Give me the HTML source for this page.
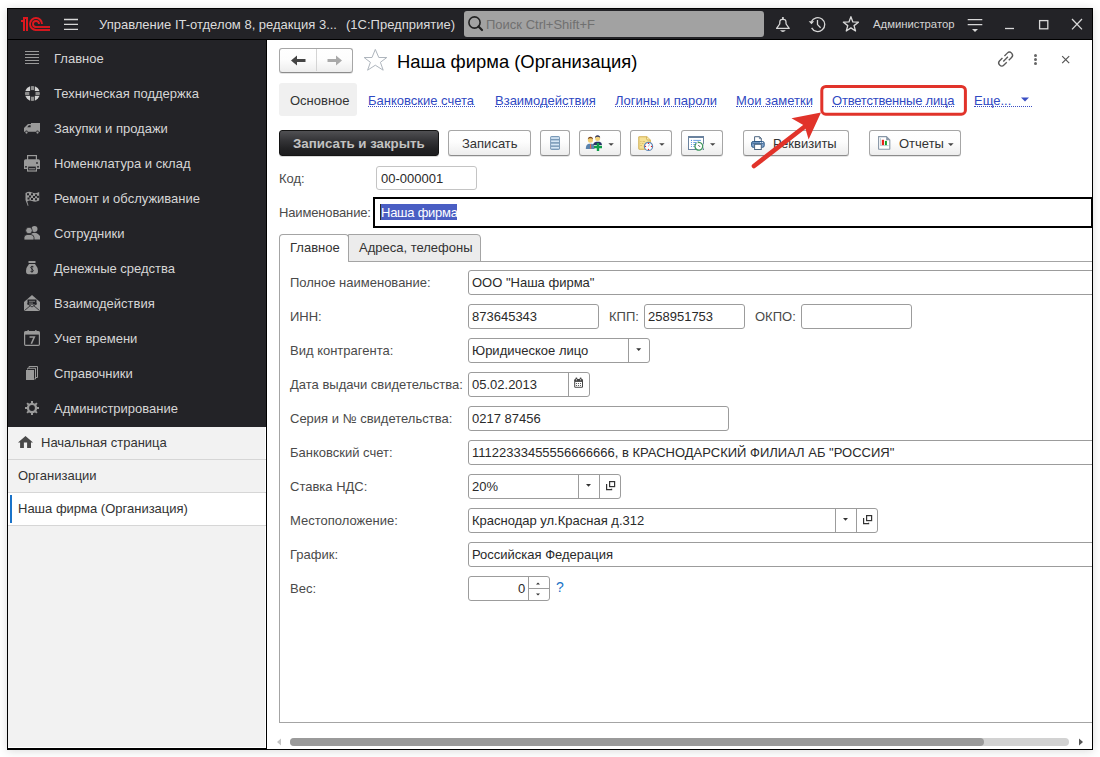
<!DOCTYPE html>
<html><head><meta charset="utf-8">
<style>
*{box-sizing:border-box;margin:0;padding:0}
html,body{width:1100px;height:757px;overflow:hidden;background:#fff;font-family:"Liberation Sans",sans-serif;font-size:13px;color:#333}
.a{position:absolute}
svg.a{overflow:visible}
.t{position:absolute;white-space:nowrap;line-height:15px}
#win{position:absolute;left:7px;top:8px;width:1086px;height:742px;border:1px solid #000;background:#fff;box-shadow:0 1px 9px rgba(0,0,0,0.15)}
#hdr{position:absolute;left:8px;top:9px;width:1084px;height:30px;background:#232327}
#hline{position:absolute;left:8px;top:39px;width:1084px;height:1px;background:#000}
#side{position:absolute;left:8px;top:40px;width:258px;height:387px;background:#232327}
#sline{position:absolute;left:266px;top:40px;width:1px;height:709px;background:#000}
#sidel{position:absolute;left:8px;top:427px;width:258px;height:321px;background:#f2f2f2;border-right:1px solid #fff;border-bottom:1px solid #fff}
#sbot{position:absolute;left:8px;top:748px;width:258px;height:1px;background:#000}
.st{color:#d6d6d6}
.sep{position:absolute;left:8px;width:258px;height:1px;background:#d6d6d6}
.lnk{color:#3049c2;line-height:15px}
.ul{position:absolute;height:1px;border-top:1px dotted #3b4fc4}
.btn{position:absolute;height:26px;border:1px solid #a6a6a6;border-bottom-color:#8c8c8c;border-radius:3px;background:linear-gradient(#ffffff 0%,#fdfdfd 45%,#ededed 100%);box-shadow:0 1px 0 rgba(0,0,0,0.10)}
.inp{position:absolute;height:25px;border:1px solid #9c9c9c;border-radius:3px;background:#fff}
.vd{position:absolute;width:1px;background:#9c9c9c}
.lbl{color:#4a4a4a}
.val{color:#2a2a2a}
</style></head><body>
<div id="win"></div>
<div id="hdr"></div>
<div id="hline"></div>
<div id="side"></div>
<div id="sline"></div>
<div id="sidel"></div>
<div id="sbot"></div>

<div class="a" style="left:0;top:0;width:1092px;height:749px;overflow:hidden">
<!-- header -->
<svg class="a" style="left:0;top:0" width="60" height="40">
 <g fill="#dd181e">
  <rect x="23" y="17" width="5" height="2"/>
  <rect x="23" y="17" width="2" height="14"/>
  <rect x="26" y="17" width="2" height="14"/>
  <rect x="21" y="20" width="3" height="2"/>
 </g>
 <g fill="none" stroke="#dd181e" stroke-width="1.9">
  <path d="M36 30 A6 6 0 1 1 42 24"/>
  <path d="M36 27 A3 3 0 1 1 39 24"/>
  <path d="M35.8 30 H50"/>
  <path d="M35.8 27 H50"/>
 </g>
</svg>
<svg class="a" style="left:0;top:0" width="90" height="40"><g stroke="#d8d8d8" stroke-width="1.3"><path d="M64 19.5H78M64 24.4H78M64 29.3H78"/></g></svg>
<div class="t" style="left:99px;top:17px;color:#dcdcdc">Управление IT-отделом 8, редакция 3...</div>
<div class="t" style="left:346px;top:17px;color:#dcdcdc">(1С:Предприятие)</div>
<div class="a" style="left:464px;top:11px;width:300px;height:26px;background:#a2a2a2;border-radius:3px"></div>
<svg class="a" style="left:464px;top:11px" width="30" height="26"><circle cx="10.5" cy="11.5" r="5.6" fill="none" stroke="#222" stroke-width="1.6"/><path d="M14.5 15.5 L18 19" stroke="#222" stroke-width="2.2" stroke-linecap="round"/></svg>
<div class="t" style="left:486px;top:17px;color:#707070">Поиск Ctrl+Shift+F</div>
<!-- bell -->
<svg class="a" style="left:770px;top:10px" width="26" height="26"><path d="M6.6 18.4 L9.7 14 L9.9 11.3 Q10.1 9.4 12.9 9.4 Q15.7 9.4 15.9 11.3 L16.1 14 L19.2 18.4 Z" fill="none" stroke="#d8d8d8" stroke-width="1.3" stroke-linejoin="round"/><circle cx="12.9" cy="8.1" r="1.1" fill="#d8d8d8"/><path d="M10 20.2 H15.8 Q12.9 23.6 10 20.2Z" fill="#d8d8d8"/></svg>
<!-- history -->
<svg class="a" style="left:803px;top:10px" width="28" height="26"><path d="M8.6 17.9 A7 7 0 1 0 8.4 11.6" fill="none" stroke="#d8d8d8" stroke-width="1.3"/><path d="M5.7 11.3 H11.2 L8.5 14.3Z" fill="#d8d8d8"/><path d="M14.5 10 V14.6 L17.6 17.7" fill="none" stroke="#d8d8d8" stroke-width="1.3"/></svg>
<!-- star header -->
<svg class="a" style="left:838px;top:10px" width="26" height="26"><path d="M12.90 6.70 L14.84 11.93 L20.41 12.16 L16.04 15.62 L17.54 20.99 L12.90 17.90 L8.26 20.99 L9.76 15.62 L5.39 12.16 L10.96 11.93Z" fill="none" stroke="#d8d8d8" stroke-width="1.3" stroke-linejoin="round"/></svg>
<div class="t" style="left:873px;top:17px;color:#d4d4d4;font-size:11.3px">Администратор</div>
<svg class="a" style="left:960px;top:10px" width="30" height="26"><path d="M7.7 9.6H22.3M7.7 14.6H22.3" stroke="#d8d8d8" stroke-width="1.3"/><path d="M12 19 H18 L15 22Z" fill="#d8d8d8"/></svg>
<svg class="a" style="left:1000px;top:10px" width="90" height="26"><path d="M5 18.5 H14" stroke="#d8d8d8" stroke-width="1.3"/><rect x="39.6" y="10.6" width="8.2" height="8.2" fill="none" stroke="#d8d8d8" stroke-width="1.3"/><path d="M72 9 L82 19.4 M82 9 L72 19.4" stroke="#d8d8d8" stroke-width="1.3"/></svg>

<!-- sidebar -->
<svg class="a" style="left:0;top:40px" width="50" height="390">
 <g fill="#9a9a9a">
  <rect x="25" y="11" width="14" height="1"/><rect x="25" y="14" width="14" height="1"/><rect x="25" y="17" width="14" height="1"/><rect x="25" y="20" width="14" height="1"/><rect x="25" y="23" width="14" height="1"/>
 </g>
 <!-- lifebuoy center 32.5,53.5 -->
 <clipPath id="lb"><circle cx="32.4" cy="53.4" r="7.5"/></clipPath>
 <g clip-path="url(#lb)">
  <g fill="#d2d2d2"><rect x="24" y="45" width="6.1" height="6"/><rect x="34.8" y="45" width="6.1" height="6"/><rect x="24" y="55.8" width="6.1" height="6"/><rect x="34.8" y="55.8" width="6.1" height="6"/></g>
  <g fill="#8e8e8e"><rect x="30.9" y="45.5" width="3.1" height="4.6"/><rect x="30.9" y="56.7" width="3.1" height="4.6"/><rect x="24.5" y="51.85" width="4.8" height="3.15"/><rect x="35.5" y="51.85" width="4.8" height="3.15"/></g>
 </g>
 <!-- truck -->
 <path d="M24 91.8 V88 L28 84 H31 V83 H40 V91.8 H38.7 A1.2 1.2 0 0 0 36.3 91.8 H27.7 A1.2 1.2 0 0 0 25.3 91.8Z" fill="#9a9a9a"/>
 <path d="M27.2 87.2 L28.9 85.2 H30.6 V87.2Z" fill="#232327"/>
 <circle cx="26.5" cy="92.6" r="1.1" fill="#9a9a9a"/><circle cx="37.5" cy="92.6" r="1.1" fill="#9a9a9a"/>
 <!-- printer -->
 <rect x="27.6" y="115.6" width="8.8" height="5" fill="none" stroke="#9a9a9a" stroke-width="1.2"/>
 <path d="M24 121 Q24 119.3 25.7 119.3 H38.3 Q40 119.3 40 121 V129 H37 V126 H27 V129 H24Z" fill="#9a9a9a"/>
 <rect x="27.6" y="126" width="8.8" height="5" fill="none" stroke="#9a9a9a" stroke-width="1.2"/>
 <rect x="29" y="128.3" width="6" height="1" fill="#9a9a9a"/>
 <rect x="36.2" y="122.2" width="1.6" height="1.6" fill="#232327"/><rect x="25.2" y="126" width="1.6" height="1.6" fill="#232327"/><rect x="37.2" y="126" width="1.6" height="1.6" fill="#232327"/>
 <!-- flag -->
 <path d="M25.5 153 Q29 151 32 152.5 Q36 154 39.2 152 V160.5 Q36 162.5 32 161 Q29 160 27.2 161.5 L28.5 165.5 L27.8 166 L25.5 160Z" fill="#9a9a9a"/>
 <g fill="#232327"><rect x="27" y="153.3" width="2" height="2"/><rect x="31" y="153.3" width="2" height="2"/><rect x="35" y="154.3" width="2" height="2"/><rect x="29" y="155.5" width="2" height="2"/><rect x="33" y="156" width="2" height="2"/><rect x="37" y="155.8" width="2" height="2"/><rect x="27.5" y="157.5" width="2" height="2"/><rect x="31" y="158" width="2" height="2"/><rect x="35" y="158.3" width="2" height="2"/></g>
 <!-- people -->
 <circle cx="34.5" cy="189" r="3" fill="#9a9a9a"/>
 <path d="M31 194 Q34.5 191.5 38 194 L40 196 V199.5 H32Z" fill="#9a9a9a"/>
 <path d="M29.5 192.6 V191" stroke="#232327" stroke-width="0"/>
 <circle cx="29" cy="190.5" r="3.3" fill="#9a9a9a" stroke="#232327" stroke-width="0.8"/>
 <path d="M24 200 V197.5 Q24 195 27 194.5 H31 Q34 195 34 197.5 V200Z" fill="#9a9a9a" stroke="#232327" stroke-width="0.8"/>
 <!-- money bag -->
 <rect x="28.5" y="221" width="7" height="2" fill="#9a9a9a"/>
 <path d="M29 224 H35 Q38 227.5 38 231 Q38 234.3 35.5 234.3 H28.5 Q26 234.3 26 231 Q26 227.5 29 224Z" fill="#9a9a9a"/>
 <path d="M33.5 226.8 Q32 226 31 226.8 Q30 228 32 229 Q34 230 33 231.4 Q32 232.2 30.5 231.4 M32 225.8 V232.5" fill="none" stroke="#232327" stroke-width="0.9"/>
 <!-- envelope -->
 <path d="M24 262 L32 255 L40 262 V270 Q40 271 39 271 H25 Q24 271 24 270Z" fill="#9a9a9a"/>
 <rect x="27.5" y="259.5" width="9" height="5" fill="#232327"/>
 <rect x="29" y="260.8" width="6" height="1" fill="#7a7a7a"/><rect x="29" y="262.6" width="4" height="1" fill="#7a7a7a"/>
 <path d="M24.5 270.5 L30.5 265.5 M39.5 270.5 L33.5 265.5 M27 263.5 L32 267 L37 263.5" fill="none" stroke="#232327" stroke-width="0.8"/>
 <!-- calendar -->
 <rect x="24.6" y="291.6" width="14.8" height="13.8" rx="1.2" fill="none" stroke="#9a9a9a" stroke-width="1.2"/>
 <rect x="24.6" y="291.6" width="14.8" height="3" fill="#9a9a9a"/>
 <rect x="27.5" y="290" width="1.3" height="3" fill="#9a9a9a"/><rect x="35.2" y="290" width="1.3" height="3" fill="#9a9a9a"/>
 <path d="M29.5 297 H34.3 L31.3 303.8" fill="none" stroke="#9a9a9a" stroke-width="1.6"/>
 <!-- books -->
 <path d="M29 328 V326.5 H37.5 V337.5 H36" fill="none" stroke="#9a9a9a" stroke-width="1"/>
 <path d="M27.5 329.5 V328.3 H35.5 V339 H34.3" fill="none" stroke="#9a9a9a" stroke-width="1"/>
 <rect x="26" y="330" width="8" height="10" fill="#9a9a9a"/>
 <!-- gear -->
 <g stroke="#9a9a9a" stroke-width="2"><path d="M32 361V375M25 368H39M27.1 363.1L36.9 372.9M36.9 363.1L27.1 372.9"/></g>
 <circle cx="32" cy="368" r="5.2" fill="#9a9a9a"/>
 <circle cx="32" cy="368" r="2.9" fill="#232327"/>
</svg>
<div class="t st" style="left:54px;top:51px">Главное</div>
<div class="t st" style="left:54px;top:86px">Техническая поддержка</div>
<div class="t st" style="left:54px;top:121px">Закупки и продажи</div>
<div class="t st" style="left:54px;top:156px">Номенклатура и склад</div>
<div class="t st" style="left:54px;top:191px">Ремонт и обслуживание</div>
<div class="t st" style="left:54px;top:226px">Сотрудники</div>
<div class="t st" style="left:54px;top:261px">Денежные средства</div>
<div class="t st" style="left:54px;top:296px">Взаимодействия</div>
<div class="t st" style="left:54px;top:331px">Учет времени</div>
<div class="t st" style="left:54px;top:366px">Справочники</div>
<div class="t st" style="left:54px;top:401px">Администрирование</div>

<div class="sep" style="top:459px"></div>
<div class="sep" style="top:492px"></div>
<div class="a" style="left:8px;top:493px;width:258px;height:32px;background:#fff"></div>
<div class="a" style="left:10px;top:495px;width:2px;height:28px;background:#1a73c9"></div>
<div class="sep" style="top:525px"></div>
<svg class="a" style="left:0;top:420px" width="40" height="40"><path d="M25.5 16 L33 22.6 H31 V27.9 H27.1 V22.6 H23.9 V27.9 H20.1 V22.6 H18Z" fill="#4a4a4a"/></svg>
<div class="t" style="left:41px;top:435px;color:#333">Начальная страница</div>
<div class="t" style="left:18px;top:468px;color:#333">Организации</div>
<div class="t" style="left:18px;top:501px;color:#333">Наша фирма (Организация)</div>

<!-- form header -->
<div class="btn" style="left:279px;top:48px;width:74px;height:25px"></div>
<div class="a" style="left:316px;top:49px;width:1px;height:22px;background:#d4d4d4"></div>
<svg class="a" style="left:279px;top:48px" width="74" height="25"><path d="M12 12.5 L18 7.5 V11 H26.5 V14 H18 V17.5Z" fill="#444"/><path d="M63 12.5 L57 7.5 V11 H48.5 V14 H57 V17.5Z" fill="#a9a9a9"/></svg>
<svg class="a" style="left:360px;top:46px" width="30" height="30"><path d="M15.3 3.4 L18.8 11.5 L26.8 11.5 L20.4 16.3 L23.2 24.2 L15.3 19.2 L7.6 24.2 L10.4 16.3 L4.1 11.5 L12 11.5Z" fill="none" stroke="#aeb5bd" stroke-width="1" stroke-linejoin="round"/></svg>
<div class="t" style="left:397px;top:51px;font-size:18.4px;line-height:21px;color:#000">Наша фирма (Организация)</div>
<svg class="a" style="left:990px;top:45px" width="90" height="30">
 <g fill="none" stroke="#5a5a5a" transform="translate(15.6 14.1) rotate(-45) scale(1.17)" stroke-width="1.15">
  <path d="M-1.2 -2.6 H-4.6 A2.6 2.6 0 0 0 -4.6 2.6 H-1.2"/>
  <path d="M1.2 -2.6 H4.6 A2.6 2.6 0 0 1 4.6 2.6 H1.2"/>
  <path d="M-2.8 0 H2.8"/>
 </g>
 <g fill="#666"><circle cx="45.5" cy="10.5" r="1.5"/><circle cx="45.5" cy="14.5" r="1.5"/><circle cx="45.5" cy="18.5" r="1.5"/></g>
 <path d="M72.2 11.2 L79.2 18.2 M79.2 11.2 L72.2 18.2" stroke="#555" stroke-width="1.2"/>
</svg>

<div class="a" style="left:279px;top:83px;width:78px;height:33px;background:#f0f0f0;border-radius:3px"></div>
<div class="t" style="left:290px;top:93px;color:#333">Основное</div>
<div class="t lnk" style="left:368px;top:93px">Банковские счета</div><div class="ul" style="left:368px;top:106px;width:107px"></div>
<div class="t lnk" style="left:495px;top:93px">Взаимодействия</div><div class="ul" style="left:495px;top:106px;width:100px"></div>
<div class="t lnk" style="left:615px;top:93px">Логины и пароли</div><div class="ul" style="left:615px;top:106px;width:101px"></div>
<div class="t lnk" style="left:736px;top:93px">Мои заметки</div><div class="ul" style="left:736px;top:106px;width:76px"></div>
<div class="t lnk" style="left:832px;top:93px;letter-spacing:-0.2px">Ответственные лица</div><div class="ul" style="left:832px;top:106px;width:122px"></div>
<div class="t lnk" style="left:974px;top:93px">Еще...</div><div class="ul" style="left:974px;top:106px;width:58px"></div>
<svg class="a" style="left:1020px;top:96px" width="12" height="10"><path d="M1 1.5 H9 L5 5.5Z" fill="#3b4fc4"/></svg>

<!-- toolbar -->
<div class="a" style="left:279px;top:130px;width:160px;height:26px;background:linear-gradient(#505053,#343437 40%,#222224 75%,#1d1d1f);border-radius:3px;border:1px solid #141414;box-shadow:0 1px 0 rgba(0,0,0,0.15)"></div>
<div class="t" style="left:293px;top:136px;color:#c2c2c2;font-weight:bold;font-size:13.3px">Записать и закрыть</div>
<div class="btn" style="left:448px;top:130px;width:83px"></div>
<div class="t" style="left:462px;top:136px;color:#333">Записать</div>
<div class="btn" style="left:540px;top:130px;width:30px"></div>
<svg class="a" style="left:540px;top:130px" width="30" height="26"><rect x="10.1" y="6.1" width="9.9" height="13.8" rx="1.6" fill="#7a9ab8"/><g fill="#d5e6f5"><rect x="11.1" y="7.2" width="7.9" height="1.7"/><rect x="11.1" y="10.4" width="7.9" height="1.7"/><rect x="11.1" y="13.7" width="7.9" height="1.7"/><rect x="11.1" y="16.9" width="7.9" height="1.7"/></g></svg>
<div class="btn" style="left:579px;top:130px;width:42px"></div>
<svg class="a" style="left:579px;top:130px" width="42" height="26">
 <path d="M6.8 19 Q6.8 14.3 10 13.8 H13 Q15.5 14.3 15.5 19Z" fill="#5a83ad"/><path d="M11.1 14 H12 L12.2 18.8 H10.9Z" fill="#e0654f"/>
 <path d="M14 15 Q14.5 12.2 17 11.8 H20.5 Q22.8 12.2 23 15Z" fill="#283266"/>
 <circle cx="11.4" cy="10.2" r="2.5" fill="#f0cc70"/><path d="M8.8 9.6 Q8.9 6.8 11.4 6.8 Q13.9 6.8 14 9.6 Q13 8.2 11.4 8.3 Q9.8 8.2 8.8 9.6Z" fill="#7a4514"/>
 <circle cx="18.6" cy="8.6" r="2.5" fill="#f2d27a"/><path d="M16 8 Q16.1 5.2 18.6 5.2 Q21.1 5.2 21.2 8 Q20.2 6.6 18.6 6.7 Q17 6.6 16 8Z" fill="#2d3157"/>
 <path d="M17.8 13 H20.2 V15.8 H23 V18.2 H20.2 V21 H17.8 V18.2 H15 V15.8 H17.8Z" fill="#0f9b48"/>
 <path d="M29.4 13.2 H34.8 L32.1 15.8Z" fill="#444"/>
</svg>
<div class="btn" style="left:630px;top:130px;width:42px"></div>
<svg class="a" style="left:630px;top:130px" width="42" height="26">
 <path d="M8.8 7.3 Q8.8 6.7 9.4 6.7 H16.8 L20.3 10.2 V19 Q20.3 19.2 20 19.2 H9.4 Q8.8 19.2 8.8 18.6Z" fill="#f6e195" stroke="#d2b155" stroke-width="1.1"/>
 <path d="M16.6 6.8 V8.8 Q16.6 10 17.8 10 H20.2" fill="#fbeeb8" stroke="#d2b155" stroke-width="1"/>
 <path d="M10.2 11.5H11.6M12.6 11.5H15M10.2 13.5H10.8M11.8 13.5H13.5M10.2 15.5H12" stroke="#d8bd6a" stroke-width="0.9"/>
 <circle cx="18.5" cy="16.4" r="4.1" fill="#fdfeff" stroke="#6189b6" stroke-width="1.2"/>
 <path d="M18.4 16.5 L19.6 14.3" stroke="#8fb0dc" stroke-width="0.9"/>
 <g fill="#e81d1d"><circle cx="18.5" cy="13.4" r="0.65"/><circle cx="18.5" cy="19.4" r="0.65"/><circle cx="15.5" cy="16.4" r="0.65"/><circle cx="21.5" cy="16.4" r="0.65"/></g>
 <path d="M29.2 13.3 H34.6 L31.9 15.8Z" fill="#444"/>
</svg>
<div class="btn" style="left:681px;top:130px;width:42px"></div>
<svg class="a" style="left:681px;top:130px" width="42" height="26">
 <rect x="7.5" y="6.5" width="15" height="13" fill="#fff" stroke="#6a829e" stroke-width="1"/><rect x="7" y="6" width="16" height="2" fill="#6a829e"/>
 <g fill="#4f8ee0"><circle cx="10.5" cy="10.4" r="0.6"/><circle cx="10.5" cy="12.5" r="0.6"/><circle cx="10.5" cy="14.5" r="0.6"/><circle cx="10.5" cy="16.5" r="0.6"/></g>
 <path d="M12.3 10.4H20M12.3 12.5H16.5M12.3 14.5H15M12.3 16.5H14.5" stroke="#5b95e0" stroke-width="0.9"/>
 <circle cx="18.4" cy="16.2" r="4.6" fill="#fff"/>
 <path d="M15.3 13.3 A3.9 3.9 0 1 0 17.4 12.4" fill="none" stroke="#3f955c" stroke-width="1.3"/><path d="M16.6 11.3 L18.6 12.3 L16.8 13.5Z" fill="#3f955c"/>
 <path d="M17.4 15.2 L19 16.8" stroke="#444" stroke-width="1"/>
 <path d="M29 13.3 H34.4 L31.7 15.8Z" fill="#444"/>
</svg>
<div class="btn" style="left:743px;top:130px;width:106px"></div>
<svg class="a" style="left:743px;top:130px" width="30" height="26">
 <path d="M11.6 11.5 V6.7 H16.6 L18.3 8.4 V11.5" fill="#fff" stroke="#4d6680" stroke-width="1"/><path d="M16.4 6.8 V8.6 H18.2" fill="none" stroke="#4d6680" stroke-width="0.8"/>
 <rect x="8.6" y="11.5" width="12.6" height="5.8" rx="1.6" fill="#7fa3cc" stroke="#2b5886" stroke-width="1"/>
 <path d="M9.5 13.3 H20.3" stroke="#2b5886" stroke-width="0.8"/>
 <rect x="11.6" y="14.3" width="6.7" height="5.2" fill="#fff" stroke="#4d6680" stroke-width="1"/>
 <circle cx="17.6" cy="12.4" r="0.5" fill="#fff"/><circle cx="19.6" cy="12.4" r="0.5" fill="#fff"/>
</svg>
<div class="t" style="left:773px;top:136px;color:#333">Реквизиты</div>
<div class="btn" style="left:869px;top:130px;width:92px"></div>
<svg class="a" style="left:869px;top:130px" width="92" height="26">
 <path d="M9.6 6.6 H17.4 L20.8 10 V19 Q20.8 19.2 20.6 19.2 H9.8 Q9.6 19.2 9.6 19Z" fill="#fff" stroke="#8796a6" stroke-width="1.1"/>
 <path d="M17.2 6.6 L20.8 10.2 H17.2Z" fill="#8796a6"/>
 <path d="M11.5 8.2 V15.6 H19.6" fill="none" stroke="#8fb0b8" stroke-width="0.6"/>
 <rect x="12.8" y="9.8" width="2.2" height="5.3" fill="#e8231e"/><rect x="15.9" y="10.9" width="2" height="4.2" fill="#14a02a"/>
 <path d="M79 13.2 H84.6 L81.8 15.9Z" fill="#444"/>
</svg>
<div class="t" style="left:899px;top:136px;color:#333">Отчеты</div>

<!-- Kod / Name -->
<div class="t lbl" style="left:279px;top:171px">Код:</div>
<div class="inp" style="left:376px;top:166px;width:101px;height:24px;border-color:#c4c4c4"></div>
<div class="t val" style="left:381px;top:171px">00-000001</div>
<div class="t lbl" style="left:279px;top:205px;letter-spacing:-0.15px">Наименование:</div>
<div class="a" style="left:373px;top:197px;width:720px;height:31px;border:2px solid #000"></div>
<div class="a" style="left:380px;top:204px;width:77px;height:16px;background:#4a5ec3"></div>
<div class="t" style="left:381px;top:205px;color:#fff;letter-spacing:-0.25px">Наша фирма</div>
<div class="a" style="left:380px;top:204px;width:1px;height:16px;background:#2b2b2b"></div>

<!-- tabs -->
<div class="a" style="left:279px;top:234px;width:70px;height:28px;border:1px solid #a4a4a4;border-bottom:none;border-radius:4px 4px 0 0;background:#fff"></div>
<div class="a" style="left:348px;top:234px;width:133px;height:28px;border:1px solid #a4a4a4;border-radius:0 4px 0 0;background:#ececec"></div>
<div class="a" style="left:480px;top:261px;width:613px;height:1px;background:#a4a4a4"></div>
<div class="a" style="left:279px;top:261px;width:814px;height:462px;border:1px solid #a4a4a4;border-top:none"></div>
<div class="t" style="left:290px;top:240px;color:#333">Главное</div>
<div class="t" style="left:359px;top:240px;color:#333">Адреса, телефоны</div>

<!-- form rows -->
<div class="t lbl" style="left:290px;top:275px">Полное наименование:</div>
<div class="inp" style="left:468px;top:270px;width:630px"></div>
<div class="t val" style="left:472px;top:275px">ООО "Наша фирма"</div>

<div class="t lbl" style="left:290px;top:309px">ИНН:</div>
<div class="inp" style="left:468px;top:304px;width:131px"></div>
<div class="t val" style="left:472px;top:309px">873645343</div>
<div class="t lbl" style="left:609px;top:309px">КПП:</div>
<div class="inp" style="left:644px;top:304px;width:101px"></div>
<div class="t val" style="left:648px;top:309px">258951753</div>
<div class="t lbl" style="left:755px;top:309px">ОКПО:</div>
<div class="inp" style="left:801px;top:304px;width:111px"></div>

<div class="t lbl" style="left:290px;top:343px">Вид контрагента:</div>
<div class="inp" style="left:468px;top:338px;width:182px"></div>
<div class="vd" style="left:628px;top:339px;height:23px"></div>
<svg class="a" style="left:628px;top:338px" width="22" height="25"><path d="M8.2 10.3 H13.2 L10.7 13Z" fill="#333"/></svg>
<div class="t val" style="left:472px;top:343px">Юридическое лицо</div>

<div class="t lbl" style="left:290px;top:377px">Дата выдачи свидетельства:</div>
<div class="inp" style="left:468px;top:372px;width:122px"></div>
<div class="vd" style="left:568px;top:373px;height:23px"></div>
<svg class="a" style="left:568px;top:372px" width="22" height="25"><rect x="6.2" y="7" width="8.8" height="8.8" rx="1.2" fill="#444"/><rect x="7.2" y="9.9" width="6.8" height="4.9" fill="#fff"/><circle cx="8.4" cy="6.6" r="1" fill="#444"/><circle cx="12.6" cy="6.6" r="1" fill="#444"/><rect x="7.9" y="7.3" width="1" height="1" fill="#fff"/><rect x="12.1" y="7.3" width="1" height="1" fill="#fff"/><g fill="#444"><circle cx="8.5" cy="11.5" r="0.6"/><circle cx="10.5" cy="11.5" r="0.6"/><circle cx="12.5" cy="11.5" r="0.6"/><circle cx="8.5" cy="13.5" r="0.6"/><circle cx="10.5" cy="13.5" r="0.6"/><circle cx="12.5" cy="13.5" r="0.6"/></g></svg>
<div class="t val" style="left:472px;top:377px">05.02.2013</div>

<div class="t lbl" style="left:290px;top:411px">Серия и № свидетельства:</div>
<div class="inp" style="left:468px;top:406px;width:261px"></div>
<div class="t val" style="left:472px;top:411px">0217 87456</div>

<div class="t lbl" style="left:290px;top:445px">Банковский счет:</div>
<div class="inp" style="left:468px;top:440px;width:630px"></div>
<div class="t val" style="left:472px;top:445px">11122333455556666666, в КРАСНОДАРСКИЙ ФИЛИАЛ АБ "РОССИЯ"</div>

<div class="t lbl" style="left:290px;top:479px">Ставка НДС:</div>
<div class="inp" style="left:468px;top:474px;width:153px"></div>
<div class="vd" style="left:578px;top:475px;height:23px"></div>
<div class="vd" style="left:599px;top:475px;height:23px"></div>
<svg class="a" style="left:578px;top:474px" width="44" height="25"><path d="M8 10 H13 L10.5 12.8Z" fill="#333"/><g fill="none" stroke="#333" stroke-width="1.2"><rect x="31.6" y="7.6" width="5" height="5"/><path d="M29.2 10.6 H28.6 V15.6 H33.6 V14.8"/></g></svg>
<div class="t val" style="left:472px;top:479px">20%</div>

<div class="t lbl" style="left:290px;top:513px">Местоположение:</div>
<div class="inp" style="left:468px;top:508px;width:410px"></div>
<div class="vd" style="left:835px;top:509px;height:23px"></div>
<div class="vd" style="left:856px;top:509px;height:23px"></div>
<svg class="a" style="left:835px;top:508px" width="44" height="25"><path d="M8 10 H13 L10.5 12.8Z" fill="#333"/><g fill="none" stroke="#333" stroke-width="1.2"><rect x="31.6" y="7.6" width="5" height="5"/><path d="M29.2 10.6 H28.6 V15.6 H33.6 V14.8"/></g></svg>
<div class="t val" style="left:472px;top:513px">Краснодар ул.Красная д.312</div>

<div class="t lbl" style="left:290px;top:547px">График:</div>
<div class="inp" style="left:468px;top:542px;width:630px"></div>
<div class="t val" style="left:472px;top:547px">Российская Федерация</div>

<div class="t lbl" style="left:290px;top:581px">Вес:</div>
<div class="inp" style="left:468px;top:576px;width:82px"></div>
<div class="vd" style="left:528px;top:577px;height:23px"></div>
<div class="a" style="left:528px;top:588px;width:21px;height:1px;background:#9c9c9c"></div>
<svg class="a" style="left:528px;top:576px" width="22" height="25"><path d="M8 8.4 H12 L10 6.4Z M8 17.4 H12 L10 19.4Z" fill="#333"/></svg>
<div class="t val" style="left:518px;top:581px">0</div>
<div class="t" style="left:556px;top:580px;color:#1a73c6;font-size:14px">?</div>


<!-- scrollbar -->
<svg class="a" style="left:272px;top:736px" width="12" height="12"><path d="M9 2.5 V9.5 L5 6Z" fill="#c4c4c4"/></svg>
<div class="a" style="left:290px;top:738px;width:779px;height:8px;background:#d2d2d2;border-radius:4px"></div>
<div class="a" style="left:290px;top:738px;width:694px;height:8px;background:#9a9a9a;border-radius:4px"></div>
<svg class="a" style="left:1074px;top:736px" width="12" height="12"><path d="M5 2.5 V9.5 L9 6Z" fill="#555"/></svg>

<!-- annotation -->
<svg class="a" style="left:0;top:0" width="1092" height="200">
 <rect x="821.8" y="86.5" width="143.6" height="27.7" rx="4" fill="none" stroke="#e1332a" stroke-width="3"/>
 <path d="M754 166 L805.5 126" stroke="#e1332a" stroke-width="4.6" stroke-linecap="round"/>
 <path d="M821 112.6 L791.5 118.3 L804.6 125.8 L808.6 139.6Z" fill="#e1332a"/>
</svg>
</div>
<div class="a" style="left:1092px;top:40px;width:1px;height:709px;background:#000"></div>
</body></html>
